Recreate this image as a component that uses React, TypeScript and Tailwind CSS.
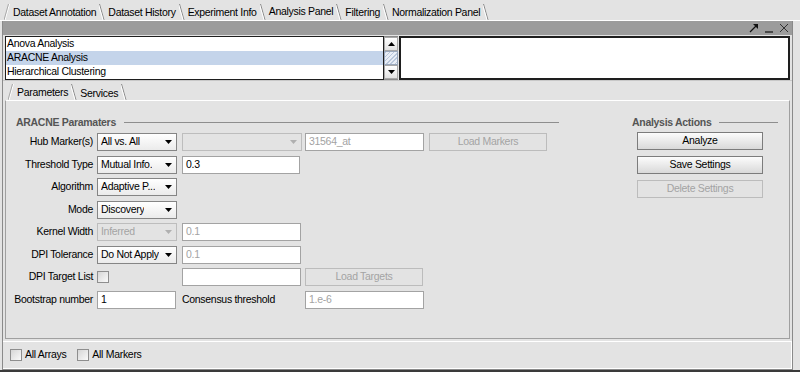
import React from 'react';

function cn(...classes: any[]) {
  return classes.filter(Boolean).join(' ');
}

// slanted edge used by the swing-style tabs
const Slash = ({ back = true }: { back?: boolean }) => (
  <svg width="6" height="17" viewBox="0 0 6 17" className="shrink-0">
    {back ? (
      <>
        <line x1="0.5" y1="1" x2="5" y2="17" stroke="#8a8a8a" strokeWidth="1" />
        <line x1="-0.5" y1="1.5" x2="4" y2="17" stroke="#ffffff" strokeWidth="1" />
      </>
    ) : (
      <>
        <line x1="5.5" y1="1" x2="1" y2="17" stroke="#ffffff" strokeWidth="1" />
        <line x1="4.5" y1="1" x2="0" y2="17" stroke="#a8a8a8" strokeWidth="1" />
      </>
    )}
  </svg>
);

const Tab = ({ label, active, low }: { label: string; active?: boolean; low?: boolean }) => (
  <div className="flex items-end h-full">
    <span
      className={cn(
        'px-[3px] leading-none whitespace-nowrap',
        low ? (active ? 'pb-[3px]' : 'pb-[2px]') : active ? 'pb-[4px]' : 'pb-[3px]'
      )}
    >
      {label}
    </span>
    <Slash />
  </div>
);

const Arrow = () => (
  <svg width="7" height="4" viewBox="0 0 7 4">
    <polygon points="0,0 7,0 3.5,4" fill="currentColor" />
  </svg>
);

const Combo = ({ value, className, disabled }: { value: string; className: string; disabled?: boolean }) => (
  <div
    className={cn(
      'h-[18px] flex items-center justify-between pl-[3px] pr-[4px] border',
      disabled
        ? 'border-[#bdbdbd] bg-[#e3e3e3] text-[#a3a3a3]'
        : 'border-[#858585] bg-gradient-to-b from-white to-[#ebebeb] text-black',
      className
    )}
  >
    <span className="truncate">{value}</span>
    <span className={disabled ? 'text-[#b0b0b0]' : 'text-black'}>
      <Arrow />
    </span>
  </div>
);

const Field = ({ value, className, disabled }: { value?: string; className: string; disabled?: boolean }) => (
  <div
    className={cn(
      'h-[18px] flex items-center px-[3px] bg-white border border-[#a3a3a3]',
      disabled ? 'text-[#a3a3a3]' : 'text-black',
      className
    )}
  >
    {value}
  </div>
);

const Button = ({ label, className, disabled }: { label: string; className: string; disabled?: boolean }) => (
  <div
    className={cn(
      'h-[18px] flex items-center justify-center border',
      disabled
        ? 'border-[#bcbcbc] bg-[#e3e3e3] text-[#a3a3a3]'
        : 'border-[#7c7c7c] bg-gradient-to-b from-[#fcfcfc] to-[#d9d9d9] text-black',
      className
    )}
  >
    {label}
  </div>
);

const Check = () => (
  <div className="w-[12px] h-[12px] border border-[#8e8e8e] bg-gradient-to-br from-[#d6d6d6] to-[#fafafa]" />
);

const SectionTitle = ({ title }: { title: string }) => (
  <div className="h-[13px] flex items-center gap-[8px]">
    <span className="font-bold text-[#555555] whitespace-nowrap">{title}</span>
    <div className="flex-1 h-px bg-[#8e8e8e]" />
  </div>
);

const Label = ({ children }: { children: React.ReactNode }) => (
  <div className="h-[18px] flex items-center justify-end pr-[4px] whitespace-nowrap">{children}</div>
);

export default function App() {
  return (
    <div className="w-[800px] h-[372px] bg-[#e3e3e3] flex flex-col overflow-hidden text-[10.5px] tracking-[-0.3px] text-black font-['Liberation_Sans',Arial,sans-serif] border-b-2 border-[#3a3a3a]">
      {/* top tabs */}
      <div className="h-[21px] shrink-0 flex items-end pl-[4px] border-b border-white">
        <Slash back={false} />
        <Tab label="Dataset Annotation" />
        <Tab label="Dataset History" />
        <Tab label="Experiment Info" />
        <Tab label="Analysis Panel" active />
        <Tab label="Filtering" />
        <Tab label="Normalization Panel" />
      </div>

      <div className="flex-1 flex flex-col ml-[2px] mr-[7px] border-l border-r border-b border-[#8a8a8a] min-h-0">
        {/* title bar */}
        <div className="h-[14px] shrink-0 bg-[#9c9c9c] flex items-center justify-end gap-[5px] pr-[3px]">
          <svg width="10" height="10" viewBox="0 0 10 10">
            <line x1="1" y1="9" x2="7.5" y2="2.5" stroke="#111" strokeWidth="1.2" />
            <polygon points="4,1 9,1 9,6" fill="#111" />
          </svg>
          <svg width="10" height="10" viewBox="0 0 10 10">
            <line x1="1" y1="9" x2="9" y2="9" stroke="#111" strokeWidth="1.2" />
          </svg>
          <svg width="10" height="10" viewBox="0 0 10 10">
            <line x1="1" y1="1" x2="9" y2="9" stroke="#333" strokeWidth="1" />
            <line x1="9" y1="1" x2="1" y2="9" stroke="#333" strokeWidth="1" />
          </svg>
        </div>

        {/* analysis list */}
        <div className="h-[44px] shrink-0 mt-[1px] flex pl-[2px] pr-[2px]">
          <div className="w-[379px] border border-[#1e1e1e] bg-white flex flex-col">
            <div className="h-[14px] flex items-center pl-[1px]">Anova Analysis</div>
            <div className="h-[14px] flex items-center pl-[1px] bg-[#c4d4ea]">ARACNE Analysis</div>
            <div className="h-[14px] flex items-center pl-[1px]">Hierarchical Clustering</div>
          </div>
          <div className="w-[14px] flex flex-col border-y border-[#8a8a8a] bg-[#e8e8e8]">
            <div className="h-[14px] flex items-center justify-center border border-[#a8a8a8] bg-gradient-to-b from-white to-[#e2e2e2]">
              <svg width="7" height="4" viewBox="0 0 7 4">
                <polygon points="0,4 7,4 3.5,0" fill="#000" />
              </svg>
            </div>
            <div className="flex-1 border border-[#9aa8bc] bg-[repeating-linear-gradient(135deg,#b9c7db_0px,#b9c7db_1px,#e9eef6_1px,#e9eef6_3px)]" />
            <div className="h-[14px] flex items-center justify-center border border-[#a8a8a8] bg-gradient-to-b from-white to-[#e2e2e2]">
              <Arrow />
            </div>
          </div>
          <div className="flex-1 ml-[1px] border-2 border-[#1e1e1e] bg-white" />
        </div>

        {/* sub tabs */}
        <div className="h-[20px] shrink-0 flex items-end pl-[5px] border-t border-[#c8c8c8]">
          <Slash back={false} />
          <Tab label="Parameters" active low />
          <Tab label="Services" low />
        </div>

        {/* parameters panel */}
        <div className="flex-1 mx-[2px] flex border border-[#a0a0a0] border-t-white pt-[15px] pl-[10px] min-h-0">
          <div className="w-[543px] flex flex-col">
            <SectionTitle title="ARACNE Paramaters" />
            <div className="mt-[4px] grid grid-cols-[81px_85px_123px_124px_118px] gap-y-[4.5px] items-center">
              <Label>Hub Marker(s)</Label>
              <Combo value="All vs. All" className="w-[80px]" />
              <Combo value="" className="w-[120px]" disabled />
              <Field value="31564_at" className="w-[119px]" disabled />
              <Button label="Load Markers" className="w-[118px]" disabled />

              <Label>Threshold Type</Label>
              <Combo value="Mutual Info." className="w-[80px]" />
              <Field value="0.3" className="w-[118px]" />
              <div />
              <div />

              <Label>Algorithm</Label>
              <Combo value="Adaptive P..." className="w-[80px]" />
              <div />
              <div />
              <div />

              <Label>Mode</Label>
              <Combo value="Discovery" className="w-[80px]" />
              <div />
              <div />
              <div />

              <Label>Kernel Width</Label>
              <Combo value="Inferred" className="w-[80px]" disabled />
              <Field value="0.1" className="w-[119px]" disabled />
              <div />
              <div />

              <Label>DPI Tolerance</Label>
              <Combo value="Do Not Apply" className="w-[80px]" />
              <Field value="0.1" className="w-[119px]" disabled />
              <div />
              <div />

              <Label>DPI Target List</Label>
              <div className="h-[18px] flex items-center">
                <Check />
              </div>
              <Field className="w-[119px]" />
              <Button label="Load Targets" className="w-[118px]" disabled />
              <div />

              <Label>Bootstrap number</Label>
              <Field value="1" className="w-[79px]" />
              <div className="h-[18px] flex items-center whitespace-nowrap">Consensus threshold</div>
              <Field value="1.e-6" className="w-[119px]" disabled />
              <div />
            </div>
          </div>

          <div className="ml-[73px] w-[146px] flex flex-col">
            <SectionTitle title="Analysis Actions" />
            <div className="mt-[3px] pl-[5px] flex flex-col gap-[6px]">
              <Button label="Analyze" className="w-[126px]" />
              <Button label="Save Settings" className="w-[126px]" />
              <Button label="Delete Settings" className="w-[126px]" disabled />
            </div>
          </div>
        </div>

        {/* bottom bar */}
        <div className="h-[28px] shrink-0 mt-[2px] flex items-center gap-[3px] pl-[7px] border-t border-white border-b border-r border-[#9a9a9a] border-t-white">
          <Check />
          <span className="mr-[8px]">All Arrays</span>
          <Check />
          <span>All Markers</span>
        </div>
      </div>
    </div>
  );
}
